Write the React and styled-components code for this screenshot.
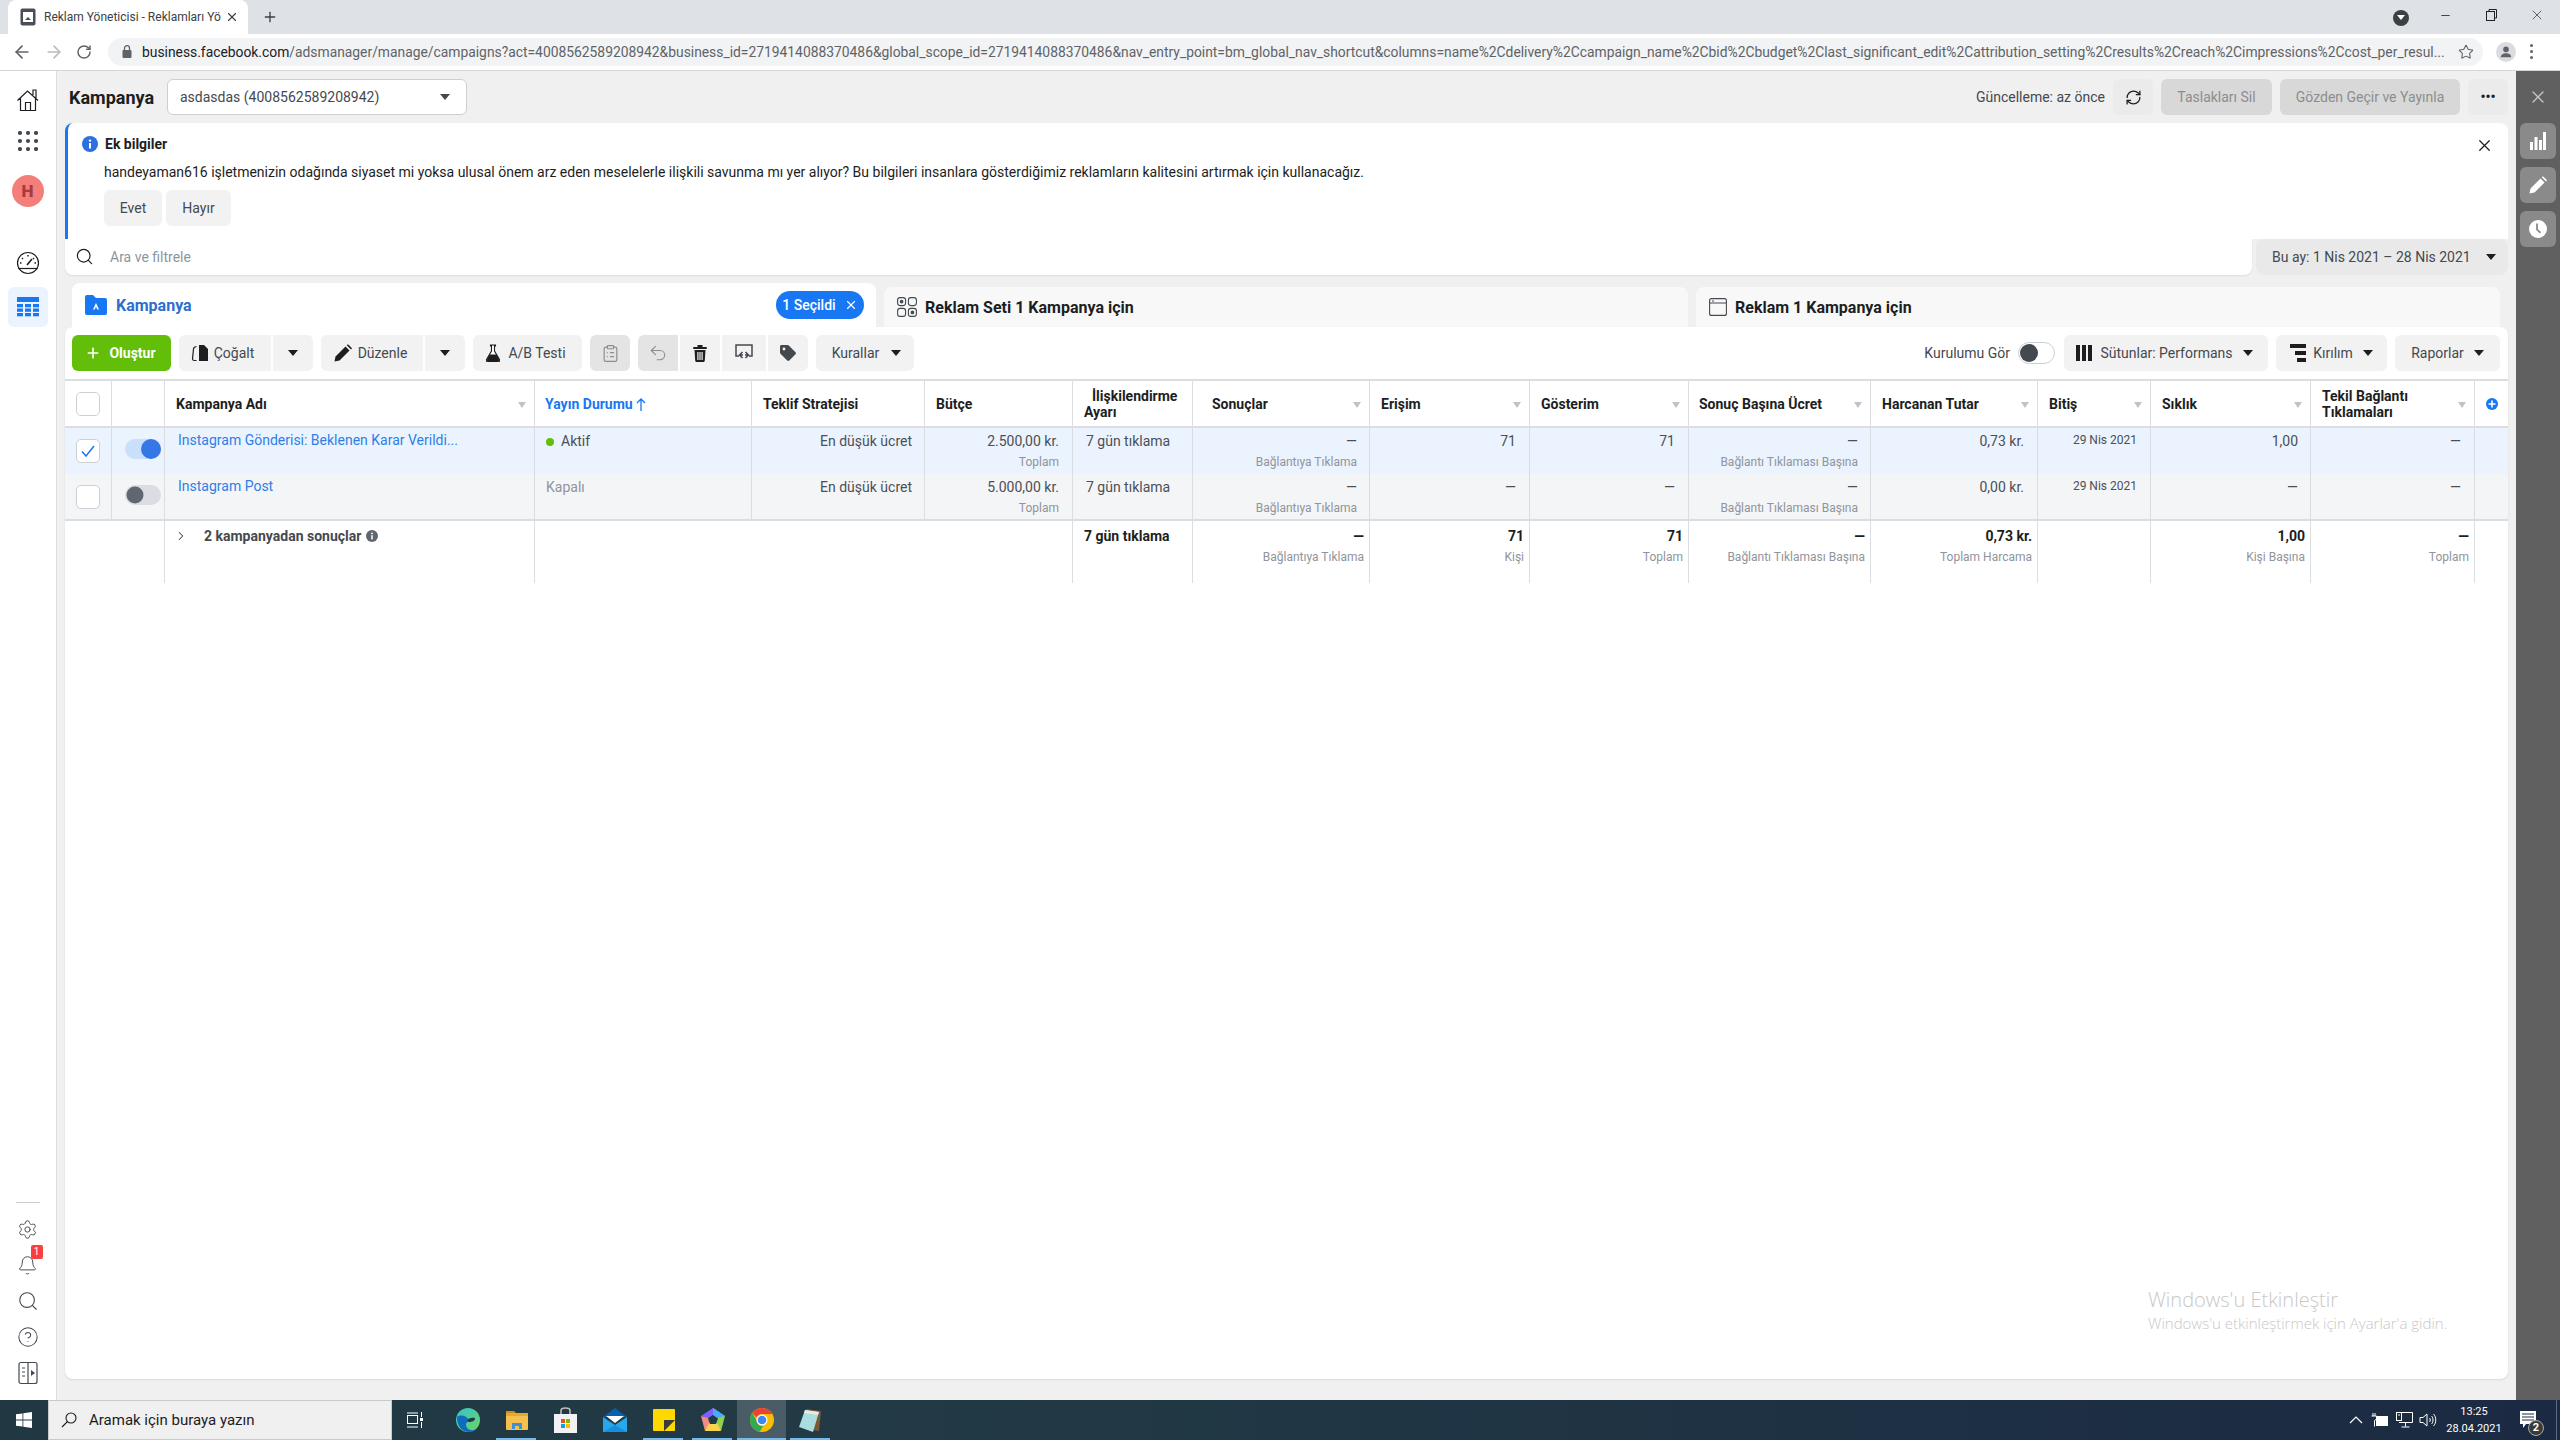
import React from 'react';
import styled, { createGlobalStyle } from 'styled-components';
import { ArrowLeft, ArrowRight, Bell, ChevronRight, CircleHelp, ClipboardList, Minus, Plus, RefreshCw, RotateCw, Search, Settings, Star, Undo2, X } from 'lucide-react';

const COLS = '47px 53px 370px 217px 173px 148px 120px 177px 160px 159px 182px 167px 113px 160px 164px 33px';

const URL_TEXT = '/adsmanager/manage/campaigns?act=4008562589208942&business_id=2719414088370486&global_scope_id=2719414088370486&nav_entry_point=bm_global_nav_shortcut&columns=name%2Cdelivery%2Ccampaign_name%2Cbid%2Cbudget%2Clast_significant_edit%2Cattribution_setting%2Cresults%2Creach%2Cimpressions%2Ccost_per_resul...';

const headers = [
	{ label: 'Kampanya Adı', pad: 11 },
	{ label: 'Yayın Durumu', pad: 10, sorted: true },
	{ label: 'Teklif Stratejisi', pad: 11, noCaret: true },
	{ label: 'Bütçe', pad: 11, noCaret: true },
	{ label: 'İlişkilendirme Ayarı', pad: 11, indent: 8, noCaret: true },
	{ label: 'Sonuçlar', pad: 19 },
	{ label: 'Erişim', pad: 11 },
	{ label: 'Gösterim', pad: 11 },
	{ label: 'Sonuç Başına Ücret', pad: 10 },
	{ label: 'Harcanan Tutar', pad: 11 },
	{ label: 'Bitiş', pad: 11 },
	{ label: 'Sıklık', pad: 11 },
	{ label: 'Tekil Bağlantı Tıklamaları', pad: 11 },
];

const rows = [
	{
		selected: true,
		name: 'Instagram Gönderisi: Beklenen Karar Verildi...',
		budget: '2.500,00 kr.',
		reach: '71',
		impressions: '71',
		spent: '0,73 kr.',
		frequency: '1,00',
	},
	{
		selected: false,
		name: 'Instagram Post',
		budget: '5.000,00 kr.',
		reach: '—',
		impressions: '—',
		spent: '0,00 kr.',
		frequency: '—',
	},
];

const summary = [
	['—', 'Bağlantıya Tıklama'],
	['71', 'Kişi'],
	['71', 'Toplam'],
	['—', 'Bağlantı Tıklaması Başına'],
	['0,73 kr.', 'Toplam Harcama'],
	null,
	['1,00', 'Kişi Başına'],
	['—', 'Toplam'],
];

const GlobalStyle = createGlobalStyle`
	html, body {
		margin: 0;
		padding: 0;
		background: #f0f0f0;
	}
	* {
		box-sizing: border-box;
	}
	body {
		font-family: Roboto, "Liberation Sans", sans-serif;
		font-size: 14px;
		color: #1c1e21;
	}
`;

const Page = styled.div`
	width: 2560px;
	height: 1440px;
	display: flex;
	flex-direction: column;
	overflow: hidden;
`;

const TabStrip = styled.div`
	height: 34px;
	flex: none;
	background: #dee1e6;
	display: flex;
	align-items: flex-end;
	padding-left: 8px;
	color: #3c4043;
`;

const BrowserTab = styled.div`
	width: 240px;
	height: 34px;
	background: #fff;
	border-radius: 8px 8px 0 0;
	display: flex;
	align-items: center;
	padding-left: 12px;
	font-size: 12px;
	color: #3c4043;
`;

const TabTitle = styled.span`
	width: 174px;
	margin-left: 8px;
	white-space: nowrap;
`;

const NewTab = styled.div`
	width: 44px;
	height: 34px;
	display: flex;
	align-items: center;
	justify-content: center;
`;

const WindowControls = styled.div`
	margin-left: auto;
	height: 34px;
	display: flex;
	align-items: center;
	color: #202124;
`;

const WindowButton = styled.div`
	width: 46px;
	height: 30px;
	margin-top: -4px;
	display: flex;
	align-items: center;
	justify-content: center;
`;

const ProfileDot = styled.div`
	width: 16px;
	height: 16px;
	border-radius: 50%;
	background: #3c4043;
	margin-right: 13px;
	margin-top: 1px;
	display: flex;
	align-items: center;
	justify-content: center;
`;

const Toolbar = styled.div`
	height: 37px;
	flex: none;
	background: #fff;
	border-bottom: 1px solid #d3d5d8;
	display: flex;
	align-items: center;
	padding-bottom: 1px;
	color: #5f6368;
`;

const NavIcons = styled.div`
	width: 108px;
	display: flex;
	align-items: center;
	gap: 12px;
	padding-left: 12px;
`;

const AddressBar = styled.div`
	width: 2375px;
	height: 28px;
	background: #f1f3f4;
	border-radius: 14px;
	display: flex;
	align-items: center;
	padding: 0 9px 0 14px;
	font-size: 13.85px;
	white-space: nowrap;
`;

const Domain = styled.span`
	color: #202124;
	margin-left: 10px;
`;

const UrlRest = styled.span`
	color: #5f6368;
	flex: 1;
	min-width: 0;
`;

const Avatar = styled.div`
	width: 20px;
	height: 20px;
	margin-left: 13px;
	border-radius: 50%;
	background: #dadce0;
	display: flex;
	align-items: center;
	justify-content: center;
`;

const Kebab = styled.div`
	margin-left: 14px;
	display: flex;
	flex-direction: column;
	gap: 3px;
	i {
		width: 3px;
		height: 3px;
		border-radius: 50%;
		background: #5f6368;
	}
`;

const Workspace = styled.div`
	flex: 1;
	min-height: 0;
	display: flex;
`;

const LeftRail = styled.nav`
	width: 57px;
	flex: none;
	background: #fff;
	border-right: 1px solid #dadde1;
	display: flex;
	flex-direction: column;
	align-items: center;
	padding: 9px 1px 9px 0;
`;

const RailButton = styled.div`
	width: 40px;
	height: ${(p) => p.$h || 40}px;
	flex: none;
	margin-top: ${(p) => p.$mt || 0}px;
	border-radius: 6px;
	background: ${(p) => (p.$active ? '#ebf3fe' : 'transparent')};
	display: flex;
	align-items: center;
	justify-content: center;
	position: relative;
	color: #444950;
`;

const UserCircle = styled.div`
	width: 32px;
	height: 32px;
	border-radius: 50%;
	background: #f47f7a;
	color: #a73a42;
	font-weight: 900;
	font-size: 17px;
	display: flex;
	align-items: center;
	justify-content: center;
`;

const RailRule = styled.div`
	width: 24px;
	height: 1px;
	background: #ccd0d5;
	margin-top: auto;
	margin-bottom: 8px;
`;

const NoticeBadge = styled.span`
	position: absolute;
	top: -2px;
	left: 23px;
	width: 12px;
	height: 14px;
	border-radius: 2px;
	background: #fa3e3e;
	color: #fff;
	font-size: 10px;
	line-height: 14px;
	text-align: center;
`;

const Main = styled.main`
	flex: 1;
	min-width: 0;
	display: flex;
	flex-direction: column;
	padding: 8px 8px 21px 8px;
`;

const HeaderRow = styled.header`
	height: 36px;
	flex: none;
	display: flex;
	align-items: center;
	margin-bottom: 8px;
`;

const PageTitle = styled.h1`
	width: 94px;
	margin: 0 4px 0 4px;
	font-size: 18px;
	font-weight: 700;
	white-space: nowrap;
	color: #1c1e21;
`;

const AccountSelect = styled.div`
	width: 300px;
	height: 36px;
	background: #fff;
	border: 1px solid #ccd0d5;
	border-radius: 6px;
	display: flex;
	align-items: center;
	justify-content: space-between;
	padding: 0 16px 0 12px;
	color: #444950;
`;

const HeaderActions = styled.div`
	margin-left: auto;
	display: flex;
	align-items: center;
	gap: 8px;
	color: #444950;
`;

const Button = styled.div`
	height: 36px;
	width: ${(p) => (p.$w ? `${p.$w}px` : 'auto')};
	flex: none;
	display: flex;
	align-items: center;
	justify-content: ${(p) => p.$justify || 'center'};
	gap: ${(p) => p.$gap || 0}px;
	padding: ${(p) => p.$pad || '0'};
	border-radius: ${(p) => p.$radius || '6px'};
	background: ${(p) => p.$bg || '#f2f2f2'};
	color: ${(p) => p.$color || '#444950'};
	font-weight: ${(p) => p.$weight || 400};
	white-space: nowrap;
`;

const Caret = styled.i`
	display: block;
	width: 0;
	height: 0;
	flex: none;
	margin-left: ${(p) => p.$ml || 0}px;
	border-left: ${(p) => p.$half || 5}px solid transparent;
	border-right: ${(p) => p.$half || 5}px solid transparent;
	border-top: ${(p) => (p.$half ? 5 : 6)}px solid ${(p) => p.$color || '#1c1e21'};
`;

const Banner = styled.section`
	height: 116px;
	flex: none;
	background: #fff;
	border-left: 3px solid #1877f2;
	border-radius: 8px 8px 0 0;
	position: relative;
	padding: 12px 0 0 14px;
`;

const BannerTitle = styled.div`
	display: flex;
	align-items: center;
	gap: 7px;
	height: 18px;
	font-weight: 700;
	color: #1c1e21;
`;

const BannerText = styled.p`
	margin: 11px 0 10px 22px;
	line-height: 16px;
	color: #1c1e21;
`;

const BannerButtons = styled.div`
	display: flex;
	gap: 4px;
	margin-left: 22px;
`;

const CloseBanner = styled.div`
	position: absolute;
	top: 13px;
	right: 14px;
	color: #1c1e21;
	display: flex;
`;

const SearchRow = styled.div`
	height: 36px;
	flex: none;
	display: flex;
	gap: 4px;
`;

const SearchBox = styled.div`
	flex: 1;
	background: #fff;
	border-radius: 0 0 8px 8px;
	box-shadow: 0 1px 2px rgba(0, 0, 0, 0.08);
	display: flex;
	align-items: center;
	gap: 16px;
	padding-left: 10px;
	color: #8d949e;
	padding-bottom: 1px;
`;

const DateRange = styled.div`
	width: 252px;
	background: #e9e9e9;
	border-radius: 8px;
	display: flex;
	align-items: center;
	justify-content: space-between;
	padding: 0 12px 1px 16px;
	color: #444950;
`;

const LevelTabs = styled.div`
	height: 44px;
	flex: none;
	margin-top: 8px;
	padding: 0 8px 0 7px;
	display: flex;
	align-items: flex-end;
	gap: 8px;
`;

const LevelTab = styled.div`
	flex: 1;
	height: ${(p) => (p.$active ? 44 : 40)}px;
	background: ${(p) => (p.$active ? '#fff' : '#f8f8f8')};
	border-radius: 8px 8px 0 0;
	display: flex;
	align-items: center;
	gap: ${(p) => (p.$active ? 9 : 8)}px;
	padding: 0 12px 0 13px;
	font-size: 16px;
	font-weight: 700;
	color: ${(p) => (p.$active ? '#2d6fcc' : '#1c1e21')};
`;

const SelectedPill = styled.div`
	margin-left: auto;
	width: 88px;
	height: 28px;
	border-radius: 14px;
	background: #1877f2;
	color: #fff;
	font-size: 14px;
	font-weight: 500;
	display: flex;
	align-items: center;
	justify-content: center;
	gap: 8px;
`;

const Card = styled.section`
	flex: 1;
	min-height: 0;
	background: #fff;
	border-radius: 8px;
	box-shadow: 0 1px 2px rgba(0, 0, 0, 0.1);
	position: relative;
`;

const ActionBar = styled.div`
	height: 52px;
	padding: 8px 8px 8px 7px;
	display: flex;
	align-items: center;
`;

const ActionGroup = styled.div`
	display: flex;
	gap: 2px;
	margin-right: 8px;
`;

const ViewToggleLabel = styled.span`
	margin-left: auto;
	margin-right: 8px;
	color: #444950;
`;

const OutlineSwitch = styled.div`
	width: 37px;
	height: 22px;
	border: 1px solid #ccd0d5;
	border-radius: 11px;
	background: #fff;
	margin-right: 9px;
	padding: 1px;
	i {
		display: block;
		width: 18px;
		height: 18px;
		border-radius: 50%;
		background: #444950;
	}
`;

const GridRow = styled.div`
	display: grid;
	grid-template-columns: ${COLS};
	height: ${(p) => p.$h}px;
	background: ${(p) => p.$bg || 'transparent'};
	border-top: ${(p) => (p.$top ? '2px solid #dadde1' : '0')};
	border-bottom: ${(p) => (p.$bottom ? '2px solid #dadde1' : '0')};
`;

const HeadCell = styled.div`
	display: flex;
	align-items: center;
	justify-content: space-between;
	padding: 0 8px 0 ${(p) => p.$pad}px;
	border-right: 1px solid #dadde1;
	font-weight: 700;
	line-height: 16px;
	color: ${(p) => (p.$sorted ? '#1877f2' : '#1c1e21')};
`;

const HeadLabel = styled.span`
	display: block;
	text-indent: ${(p) => p.$indent || 0}px;
`;

const SortCaret = styled.i`
	display: block;
	flex: none;
	width: 0;
	height: 0;
	margin-top: 3px;
	border-left: 4px solid transparent;
	border-right: 4px solid transparent;
	border-top: 6px solid #bec3c9;
`;

const BoxCell = styled.div`
	border-right: ${(p) => (p.$plain ? '0' : '1px solid #dadde1')};
	padding-top: ${(p) => p.$top || 0}px;
	padding-left: ${(p) => p.$left || 0}px;
	display: flex;
	justify-content: center;
	align-items: ${(p) => (p.$center ? 'center' : 'flex-start')};
`;

const CheckBox = styled.div`
	width: 24px;
	height: 24px;
	background: #fff;
	border: 1px solid #ccd0d5;
	border-radius: 5px;
	display: flex;
	align-items: center;
	justify-content: center;
	color: #1877f2;
`;

const Toggle = styled.div`
	width: 36px;
	height: 20px;
	border-radius: 10px;
	background: ${(p) => (p.$on ? '#c9dffb' : '#dadde1')};
	display: flex;
	justify-content: ${(p) => (p.$on ? 'flex-end' : 'flex-start')};
	i {
		display: block;
		width: 20px;
		height: 20px;
		border-radius: 50%;
		background: ${(p) => (p.$on ? '#3578e5' : '#606770')};
		transform: scale(${(p) => (p.$on ? 1 : 0.85)});
	}
`;

const Cell = styled.div`
	border-right: ${(p) => (p.$plain ? '0' : '1px solid #dadde1')};
	padding: ${(p) => p.$top || 5}px ${(p) => p.$right || 13}px 0 ${(p) => p.$left || 11}px;
	text-align: ${(p) => (p.$end ? 'right' : 'left')};
	line-height: 16px;
	color: #4b4f56;
	white-space: nowrap;
`;

const CampaignLink = styled.span`
	color: #2f7fe8;
	position: relative;
	top: -1px;
`;

const StatusDot = styled.i`
	display: inline-block;
	width: 8px;
	height: 8px;
	margin-right: 7px;
	border-radius: 50%;
	background: #63be09;
`;

const Muted = styled.span`
	color: #90949c;
`;

const SubValue = styled.div`
	margin-top: 5px;
	font-size: 12px;
	line-height: 16px;
	color: #90949c;
`;

const DateValue = styled.span`
	font-size: 12px;
	position: relative;
	top: -2px;
`;

const StrongValue = styled.span`
	font-weight: 700;
	color: #1c1e21;
`;

const SummaryLabel = styled.div`
	display: flex;
	align-items: center;
	gap: 5px;
	font-weight: 700;
	color: #444950;
`;

const Watermark = styled.div`
	position: absolute;
	left: 2083px;
	top: 960px;
	color: #c8c8c8;
	font-family: "Open Sans", sans-serif;
	font-weight: 300;
	pointer-events: none;
	white-space: nowrap;
`;

const WatermarkTitle = styled.div`
	font-size: 20px;
	line-height: 26px;
`;

const WatermarkText = styled.div`
	font-size: 15px;
	line-height: 20px;
`;

const RightRail = styled.aside`
	width: 44px;
	flex: none;
	background: #606060;
	display: flex;
	flex-direction: column;
	align-items: center;
	gap: 8px;
	padding-top: 8px;
	color: #c8c8c8;
`;

const RailClose = styled.div`
	height: 36px;
	display: flex;
	align-items: center;
	justify-content: center;
`;

const RailAction = styled.div`
	width: 36px;
	height: 36px;
	border-radius: 6px;
	background: #8a8a8a;
	display: flex;
	align-items: center;
	justify-content: center;
`;

const Taskbar = styled.footer`
	height: 40px;
	flex: none;
	background: linear-gradient(90deg, #213843 0%, #223a45 35%, #1b2a42 100%);
	display: flex;
	align-items: center;
	color: #fff;
`;

const StartButton = styled.div`
	width: 48px;
	height: 40px;
	display: flex;
	align-items: center;
	justify-content: center;
`;

const TaskSearch = styled.div`
	width: 344px;
	height: 40px;
	background: #f0f0f0;
	border: 1px solid #c8cbcd;
	display: flex;
	align-items: center;
	gap: 12px;
	padding-left: 12px;
	font-size: 15px;
	color: #1c1c1c;
`;

const TaskView = styled.div`
	width: 46px;
	margin-right: 5px;
	display: flex;
	justify-content: center;
`;

const TaskItem = styled.div`
	width: 49px;
	height: 40px;
	position: relative;
	display: flex;
	align-items: center;
	justify-content: center;
	background: ${(p) => (p.$active ? 'rgba(255,255,255,0.18)' : 'transparent')};
	&::after {
		content: '';
		display: ${(p) => (p.$running ? 'block' : 'none')};
		position: absolute;
		bottom: 0;
		left: ${(p) => (p.$active ? 0 : 4)}px;
		right: ${(p) => (p.$active ? 0 : 5)}px;
		height: 2px;
		background: #76b9ed;
	}
`;

const Tray = styled.div`
	margin-left: auto;
	display: flex;
	align-items: center;
	height: 40px;
`;

const TrayIcon = styled.div`
	width: 24px;
	display: flex;
	justify-content: center;
`;

const Clock = styled.div`
	width: 62px;
	margin-left: 3px;
	text-align: center;
	font-size: 11px;
	line-height: 17px;
`;

const NoticeIcon = styled.div`
	width: 46px;
	margin-right: 5px;
	position: relative;
	display: flex;
	justify-content: center;
`;

const NoticeCount = styled.span`
	position: absolute;
	left: 23px;
	top: 9px;
	width: 16px;
	height: 16px;
	border-radius: 50%;
	background: #3a3a3a;
	border: 1px solid #aaa;
	font-size: 11px;
	font-weight: 700;
	line-height: 14px;
	text-align: center;
`;

const ShowDesktop = styled.div`
	width: 1px;
	height: 40px;
	background: #5b6a7c;
	margin-right: 3px;
`;

const Favicon = () => (
	<svg width="16" height="18" viewBox="0 0 16 18">
		<rect x="0.5" y="0.5" width="15" height="17" rx="2" fill="#4a4f57" />
		<rect x="3" y="4" width="10" height="10" fill="#fff" />
		<path d="M5 12l3-3 3 3z" fill="#4a4f57" />
	</svg>
);

const LockIcon = () => (
	<svg width="10" height="13" viewBox="0 0 10 13">
		<rect x="0.5" y="5" width="9" height="8" rx="1" fill="#5f6368" />
		<path d="M2.5 5V3.2a2.5 2.5 0 0 1 5 0V5" fill="none" stroke="#5f6368" strokeWidth="1.3" />
	</svg>
);

const PersonIcon = ({ fill = '#5f6368', size = 16 }) => (
	<svg width={size} height={size} viewBox="0 0 16 16">
		<circle cx="8" cy="5" r="3.2" fill={fill} />
		<path d="M2 14c0-3 3-4.5 6-4.5s6 1.5 6 4.5z" fill={fill} />
	</svg>
);

const HomeIcon = () => (
	<svg width="24" height="24" viewBox="0 0 24 24" fill="none" stroke="#1c1e21" strokeWidth="1.2">
		<path d="M1.5 12.5L11.5 3l10.5 9.5M4.5 10.5V22.5H19.5V10.5M9.5 22.5V14.5H14.5V22.5M17 7V2H20V10" />
	</svg>
);

const DotsIcon = () => (
	<svg width="20" height="20" viewBox="0 0 20 20" fill="#444950">
		{[2, 10, 18].map((y) => [2, 10, 18].map((x) => <circle key={`${x}${y}`} cx={x} cy={y} r="2.1" />))}
	</svg>
);

const GaugeIcon = () => (
	<svg width="24" height="24" viewBox="0 0 24 24" fill="none" stroke="#1c1e21" strokeWidth="1.2">
		<circle cx="12" cy="12" r="10.5" />
		<path d="M2.5 17.5h19" />
		<path d="M11 14l5-6" strokeWidth="1.6" />
		<path d="M12 4v1.5M6 7l1 1M18 7l-1 1M4 12h1.5M20 12h-1.5" strokeWidth="1.4" />
	</svg>
);

const TableIcon = () => (
	<svg width="22" height="20" viewBox="0 0 22 20" fill="#1877f2">
		<rect width="22" height="5" />
		{[7, 11.5, 16].map((y) => [0, 8, 16].map((x) => <rect key={`${x}${y}`} x={x} y={y} width="6" height="3.3" />))}
	</svg>
);

const PanelIcon = () => (
	<svg width="20" height="24" viewBox="0 0 20 24" fill="none" stroke="#444950" strokeWidth="1.2">
		<rect x="1" y="1.5" width="18" height="21" rx="2" />
		<path d="M10 1.5v21M4 7h3M4 11h3M4 15h3" />
		<path d="M13 9l4 3-4 3z" fill="#444950" stroke="none" />
	</svg>
);

const BarsIcon = () => (
	<svg width="16" height="18" viewBox="0 0 16 18" fill="#fff">
		<rect x="0" y="10" width="3" height="8" />
		<rect x="4.5" y="5" width="3" height="13" />
		<rect x="9" y="8" width="3" height="10" />
		<rect x="13" y="0" width="3" height="18" />
	</svg>
);

const PencilIcon = ({ fill = '#fff', size = 18 }) => (
	<svg width={size} height={size} viewBox="0 0 18 18" fill={fill}>
		<path d="M0.5 17.5l1-5L11.5 2.5l4 4-10 10zM12.8 1.2l1.2-1 4 4-1 1.2z" />
	</svg>
);

const ClockIcon = () => (
	<svg width="18" height="18" viewBox="0 0 18 18">
		<circle cx="9" cy="9" r="9" fill="#fff" />
		<path d="M8 3.5v6.2l3.5 3" fill="none" stroke="#8a8a8a" strokeWidth="1.8" />
	</svg>
);

const InfoIcon = ({ size = 16, fill = '#2d6fe0' }) => (
	<svg width={size} height={size} viewBox="0 0 16 16">
		<circle cx="8" cy="8" r="8" fill={fill} />
		<rect x="7" y="7" width="2" height="5.5" fill="#fff" />
		<circle cx="8" cy="4.6" r="1.2" fill="#fff" />
	</svg>
);

const FolderIcon = () => (
	<svg width="22" height="20" viewBox="0 0 22 20">
		<path d="M0 2a2 2 0 0 1 2-2h6l3 3h9a2 2 0 0 1 2 2v13a2 2 0 0 1-2 2H2a2 2 0 0 1-2-2z" fill="#1877f2" />
		<path d="M11 8l3 6.5h-1.8l-1.2-3-1.2 3H8z" fill="#fff" />
	</svg>
);

const AdSetIcon = () => (
	<svg width="20" height="20" viewBox="0 0 20 20" fill="none" stroke="#444950" strokeWidth="1.1">
		<rect x="0.6" y="0.6" width="8" height="8" rx="2.5" />
		<rect x="11.4" y="0.6" width="8" height="8" rx="2.5" />
		<rect x="0.6" y="11.4" width="8" height="8" rx="2.5" />
		<rect x="11.4" y="11.4" width="8" height="8" rx="2.5" />
		<circle cx="4.6" cy="4.6" r="1.3" fill="#444950" />
		<circle cx="15.4" cy="15.4" r="1.3" fill="#444950" />
	</svg>
);

const AdIcon = () => (
	<svg width="18" height="18" viewBox="0 0 18 18" fill="none" stroke="#444950" strokeWidth="1.1">
		<rect x="0.6" y="0.6" width="16.8" height="16.8" rx="2" />
		<path d="M0.6 5h16.8M3 3h2" />
	</svg>
);

const CopyIcon = () => (
	<svg width="18" height="18" viewBox="0 0 18 18">
		<path d="M8 1h5l4 4v12H8z" fill="#1c1e21" />
		<path d="M5.5 2.5C3 3 2.5 4 2.5 5l-1 10c0 1 1 1.5 2 1.5h2" fill="none" stroke="#1c1e21" strokeWidth="1.2" />
	</svg>
);

const FlaskIcon = () => (
	<svg width="14" height="18" viewBox="0 0 14 18">
		<path d="M4.5 1h5v1h-1v5l5 8.5c.5 1.2 0 2.5-1.5 2.500H2c-1.500 0-2-1.300-1.500-2.500l5-8.500V2h-1z" fill="#fff" stroke="#1c1e21" strokeWidth="1.1" />
		<path d="M3.500 10.500h7l2.500 5c.4 1-.1 2.500-1.500 2.500h-9c-1.400 0-1.900-1.500-1.500-2.500z" fill="#1c1e21" />
	</svg>
);

const TrashIcon = () => (
	<svg width="14" height="17" viewBox="0 0 14 17" fill="#1c1e21">
		<rect x="0" y="2" width="14" height="2" rx="1" />
		<rect x="4.500" y="0" width="5" height="2" />
		<path d="M1.500 5h11l-.7 10.500c0 .8-.6 1.500-1.500 1.500H3.700c-.9 0-1.500-.7-1.500-1.500zM4.300 7v8h1.200V7zm2.100 0v8h1.200V7zm2.100 0v8h1.200V7z" fillRule="evenodd" />
	</svg>
);

const ShareIcon = () => (
	<svg width="18" height="18" viewBox="0 0 18 18" fill="none" stroke="#444950" strokeWidth="1.5">
		<path d="M4 12H1V1h16v11h-3" />
		<path d="M7.500 8l-3 3 3 3M10.500 8l3 3-3 3M4.500 11h3.500M10 11h3.500" />
	</svg>
);

const TagIcon = () => (
	<svg width="18" height="18" viewBox="0 0 18 18" fill="#444950">
		<path d="M1 2.500C1 1.500 1.700 1 2.500 1h6c.5 0 1 .2 1.300.5l6.700 6.700c.6.600.6 1.500 0 2.100l-6.200 6.200c-.6.600-1.500.6-2.100 0L1.500 9.800c-.3-.3-.5-.8-.5-1.300z" />
		<circle cx="5" cy="5" r="1.400" fill="#f2f2f2" />
	</svg>
);

const ColumnsIcon = () => (
	<svg width="16" height="16" viewBox="0 0 16 16" fill="#1c1e21">
		<rect x="0" width="4" height="16" />
		<rect x="6" width="4" height="16" />
		<rect x="12" width="4" height="16" />
	</svg>
);

const BreakdownIcon = () => (
	<svg width="16" height="18" viewBox="0 0 16 18" fill="#1c1e21">
		<rect x="0" width="16" height="4" />
		<rect x="5" y="7" width="11" height="4" />
		<rect x="7" y="14" width="9" height="4" />
	</svg>
);

const AddColumnIcon = () => (
	<svg width="12" height="14" viewBox="0 0 12 14">
		<ellipse cx="6" cy="7" rx="6" ry="6" fill="#1877f2" />
		<path d="M6 3.500v7M2.500 7h7" stroke="#fff" strokeWidth="1.600" />
	</svg>
);

const WindowsLogo = () => (
	<svg width="16" height="16" viewBox="0 0 16 16" fill="#fff">
		<path d="M0 2.300L6.500 1.400V7.600H0zM7.300 1.300L16 0V7.600H7.300zM0 8.400H6.500V14.600L0 13.700zM7.300 8.400H16V16L7.300 14.700z" />
	</svg>
);

const TaskSearchIcon = () => (
	<svg width="16" height="16" viewBox="0 0 16 16" fill="none" stroke="#1c1c1c" strokeWidth="1.100">
		<circle cx="10" cy="6" r="5" />
		<path d="M6.500 9.500L1 15" />
	</svg>
);

const TaskViewIcon = () => (
	<svg width="17" height="16" viewBox="0 0 17 16" fill="none" stroke="#fff" strokeWidth="1">
		<rect x="0.500" y="3.500" width="10" height="8" />
		<path d="M0 1h11M0 15h11M14.500 0v5M14.500 10v6" />
		<rect x="13" y="6" width="3" height="3" fill="#fff" stroke="none" />
	</svg>
);

const EdgeIcon = () => (
	<svg width="24" height="24" viewBox="0 0 24 24">
		<defs>
			<linearGradient id="edgeA" x1="0" y1="0" x2="1" y2="1">
				<stop offset="0" stopColor="#36c2d0" />
				<stop offset="1" stopColor="#6ad660" />
			</linearGradient>
		</defs>
		<circle cx="12" cy="12" r="12" fill="url(#edgeA)" />
		<path d="M1 9c0 9 5 15 12 15 3 0 5-1 7-2.500-6 2-10-1-10-5 0-2 2-3.500 4-3.500C11 8 5 6 1 9z" fill="#0f6cbd" />
		<path d="M11 13c1-3 5-4 8-3 0 3-3 4-6 4z" fill="#223a45" />
	</svg>
);

const ExplorerIcon = () => (
	<svg width="22" height="20" viewBox="0 0 22 20">
		<path d="M0 1h8l2 2h-10z" fill="#c98f1a" />
		<rect x="0" y="3" width="22" height="17" rx="1" fill="#f5c14e" />
		<rect x="0" y="3" width="22" height="3" fill="#e6a82e" />
		<path d="M6 19v-6h10v6h-3v-3h-4v3z" fill="#3c8fd8" />
	</svg>
);

const StoreIcon = () => (
	<svg width="23" height="26" viewBox="0 0 23 26">
		<path d="M7 8V3.500C7 1.500 8.500 1 11.500 1S16 1.500 16 3.500V8" fill="none" stroke="#bbb" strokeWidth="1.600" />
		<rect x="0" y="7" width="23" height="19" fill="#f2f2f2" />
		<rect x="7" y="12" width="4" height="4" fill="#f25022" />
		<rect x="12" y="12" width="4" height="4" fill="#7fba00" />
		<rect x="7" y="17" width="4" height="4" fill="#00a4ef" />
		<rect x="12" y="17" width="4" height="4" fill="#ffb900" />
	</svg>
);

const MailIcon = () => (
	<svg width="24" height="24" viewBox="0 0 24 24">
		<path d="M0 9L12 0l12 9z" fill="#0a5fb0" />
		<path d="M3 8h18l-9 7z" fill="#fff" />
		<path d="M0 9l12 8 12-8v15H0z" fill="#28a8ea" />
		<path d="M0 24L12 17l12 7z" fill="#1490df" />
	</svg>
);

const StickyIcon = () => (
	<svg width="22" height="22" viewBox="0 0 22 22">
		<rect width="22" height="22" rx="1" fill="#ffd800" />
		<path d="M11 22V11h11z" fill="#e8a800" />
		<path d="M11 22V11h11l-11 11z" fill="#3b3b3b" />
	</svg>
);

const PolygonIcon = () => (
	<svg width="24" height="24" viewBox="0 0 24 24">
		<path d="M12 0l12 8-4 15-8-7z" fill="#8fd14f" />
		<path d="M12 0l-12 8 8 2 4-3z" fill="#7b61ff" />
		<path d="M12 0l12 8-8 2-4-3z" fill="#4aa8ff" />
		<path d="M0 8l4 15 8-7-4-6z" fill="#f28b82" />
		<path d="M4 23h16l-4-8H8z" fill="#fbd34d" />
		<path d="M12 7l5 3.500-2 5.500H9L7 10.500z" fill="#223a45" />
	</svg>
);

const ChromeIcon = () => (
	<svg width="24" height="24" viewBox="0 0 24 24">
		<circle cx="12" cy="12" r="12" fill="#fbbc04" />
		<path d="M12 0a12 12 0 0 1 10.400 6H12a6 6 0 0 0-5.500 3.500L2.300 4.900A12 12 0 0 1 12 0z" fill="#ea4335" />
		<path d="M2.300 4.900L7 13.500A6 6 0 0 0 13 18l-3.200 5.800A12 12 0 0 1 2.300 4.900z" fill="#34a853" />
		<circle cx="12" cy="12" r="5.500" fill="#fff" />
		<circle cx="12" cy="12" r="4.300" fill="#4285f4" />
	</svg>
);

const NotepadIcon = () => (
	<svg width="24" height="24" viewBox="0 0 24 24">
		<path d="M7 1l15 2-2 20-14-2z" fill="#7a5a34" />
		<path d="M6 2l14 2-6 20-14-5z" fill="#a9dde0" />
		<path d="M6 2l14 2-1 3-14-2z" fill="#e8e8e8" />
	</svg>
);

const BatteryIcon = () => (
	<svg width="18" height="14" viewBox="0 0 18 14" fill="none" stroke="#fff" strokeWidth="1">
		<rect x="5.500" y="3.500" width="11" height="9" fill="#fff" />
		<path d="M2 0v3M4 0v3M0.500 3h5v3l-2 1.500v6" />
	</svg>
);

const NetworkIcon = () => (
	<svg width="17" height="16" viewBox="0 0 17 16" fill="none" stroke="#fff" strokeWidth="1">
		<path d="M3 0.500h13.500v10H3M9.500 10.500v4M5.500 15h8" />
		<rect x="0.500" y="0.500" width="5" height="8" fill="#1b2a42" />
		<path d="M2 3h2" />
	</svg>
);

const SoundIcon = () => (
	<svg width="18" height="16" viewBox="0 0 18 16" fill="none" stroke="#fff" strokeWidth="1">
		<path d="M1 5.500h3L8 2v12L4 10.500H1z" />
		<path d="M10.500 6c1 1 1 3 0 4M12.500 4c2 2 2 6 0 8M14.500 2c3 3 3 9 0 12" />
	</svg>
);

const NoticeGlyph = () => (
	<svg width="16" height="18" viewBox="0 0 16 18" fill="#fff">
		<path d="M0 0h16v13H6l-3 4v-4H0z" />
		<path d="M2 3h12M2 6h12M2 9h12" stroke="#1b2a42" strokeWidth="1" />
	</svg>
);

const App = () => (
	<Page>
		<GlobalStyle />
		<TabStrip>
			<BrowserTab>
				<Favicon />
				<TabTitle>Reklam Yöneticisi - Reklamları Yö</TabTitle>
				<X size={14} strokeWidth={2} style={{ marginLeft: 7 }} />
			</BrowserTab>
			<NewTab>
				<Plus size={16} strokeWidth={2} />
			</NewTab>
			<WindowControls>
				<ProfileDot>
					<Caret $color="#fff" $half={4} />
				</ProfileDot>
				<WindowButton>
					<Minus size={13} strokeWidth={1.5} />
				</WindowButton>
				<WindowButton>
					<svg width="11" height="12" viewBox="0 0 11 12" fill="none" stroke="#202124">
						<rect x="0.5" y="2.5" width="8" height="9" />
						<path d="M3 2.500V.5h7.500v8.500H8.500" />
					</svg>
				</WindowButton>
				<WindowButton>
					<X size={16} strokeWidth={1} />
				</WindowButton>
			</WindowControls>
		</TabStrip>

		<Toolbar>
			<NavIcons>
				<ArrowLeft size={20} strokeWidth={2} />
				<ArrowRight size={20} strokeWidth={2} color="#babcbe" />
				<RotateCw size={16} strokeWidth={2.2} />
			</NavIcons>
			<AddressBar>
				<LockIcon />
				<Domain>business.facebook.com</Domain>
				<UrlRest>{URL_TEXT}</UrlRest>
				<Star size={16} strokeWidth={1.6} />
			</AddressBar>
			<Avatar>
				<PersonIcon size={14} />
			</Avatar>
			<Kebab>
				<i />
				<i />
				<i />
			</Kebab>
		</Toolbar>

		<Workspace>
			<LeftRail>
				<RailButton><HomeIcon /></RailButton>
				<RailButton $mt={1}><DotsIcon /></RailButton>
				<RailButton $mt={10}><UserCircle>H</UserCircle></RailButton>
				<RailButton $mt={32}><GaugeIcon /></RailButton>
				<RailButton $mt={4} $active><TableIcon /></RailButton>
				<RailRule />
				<RailButton $h={36}><Settings size={21} strokeWidth={1.1} /></RailButton>
				<RailButton $h={36}>
					<Bell size={21} strokeWidth={1.1} />
					<NoticeBadge>1</NoticeBadge>
				</RailButton>
				<RailButton $h={36}><Search size={22} strokeWidth={1.2} /></RailButton>
				<RailButton $h={36}><CircleHelp size={22} strokeWidth={1.1} /></RailButton>
				<RailButton $h={36}><PanelIcon /></RailButton>
			</LeftRail>

			<Main>
				<HeaderRow>
					<PageTitle>Kampanya</PageTitle>
					<AccountSelect>
						<span>asdasdas (4008562589208942)</span>
						<Caret $color="#444950" />
					</AccountSelect>
					<HeaderActions>
						<span>Güncelleme: az önce</span>
						<Button $w={40} $bg="#ebebeb">
							<RefreshCw size={17} strokeWidth={1.8} color="#1c1e21" />
						</Button>
						<Button $w={111} $bg="#d8d8d8" $color="#8d8d8d">Taslakları Sil</Button>
						<Button $w={180} $bg="#d8d8d8" $color="#8d8d8d">Gözden Geçir ve Yayınla</Button>
						<Button $w={40} $bg="#ebebeb" $color="#1c1e21"><strong>•••</strong></Button>
					</HeaderActions>
				</HeaderRow>

				<Banner>
					<BannerTitle>
						<InfoIcon />
						Ek bilgiler
					</BannerTitle>
					<BannerText>
						handeyaman616 işletmenizin odağında siyaset mi yoksa ulusal önem arz eden meselelerle ilişkili savunma mı yer alıyor? Bu bilgileri insanlara gösterdiğimiz reklamların kalitesini artırmak için kullanacağız.
					</BannerText>
					<BannerButtons>
						<Button $w={58}>Evet</Button>
						<Button $w={65}>Hayır</Button>
					</BannerButtons>
					<CloseBanner>
						<X size={19} strokeWidth={1.6} />
					</CloseBanner>
				</Banner>

				<SearchRow>
					<SearchBox>
						<Search size={19} strokeWidth={1.5} color="#1c1e21" />
						<span>Ara ve filtrele</span>
					</SearchBox>
					<DateRange>
						<span>Bu ay: 1 Nis 2021 – 28 Nis 2021</span>
						<Caret />
					</DateRange>
				</SearchRow>

				<LevelTabs>
					<LevelTab $active>
						<FolderIcon />
						Kampanya
						<SelectedPill>
							1 Seçildi
							<X size={14} strokeWidth={2} />
						</SelectedPill>
					</LevelTab>
					<LevelTab>
						<AdSetIcon />
						Reklam Seti 1 Kampanya için
					</LevelTab>
					<LevelTab>
						<AdIcon />
						Reklam 1 Kampanya için
					</LevelTab>
				</LevelTabs>

				<Card>
					<ActionBar>
						<Button $w={99} $bg="#63be09" $color="#fff" $weight={700} $gap={8} $pad="0 2px 0 0" style={{ marginRight: 8 }}>
							<Plus size={16} strokeWidth={2.5} />
							Oluştur
						</Button>
						<ActionGroup>
							<Button $w={92} $gap={5} $pad="0 5px 0 0" $radius="6px 0 0 6px"><CopyIcon />Çoğalt</Button>
							<Button $w={40} $radius="0 6px 6px 0"><Caret /></Button>
						</ActionGroup>
						<ActionGroup>
							<Button $w={102} $gap={6} $pad="0 3px 0 0" $radius="6px 0 0 6px"><PencilIcon fill="#1c1e21" />Düzenle</Button>
							<Button $w={40} $radius="0 6px 6px 0"><Caret /></Button>
						</ActionGroup>
						<ActionGroup>
							<Button $w={109} $gap={8} $pad="0 3px 0 0"><FlaskIcon />A/B Testi</Button>
						</ActionGroup>
						<ActionGroup>
							<Button $w={40} $bg="#e4e4e4"><ClipboardList size={19} strokeWidth={1.5} color="#8d8d8d" /></Button>
						</ActionGroup>
						<ActionGroup>
							<Button $w={40} $bg="#e4e4e4" $radius="6px 0 0 6px"><Undo2 size={20} strokeWidth={1.3} color="#8d8d8d" /></Button>
							<Button $w={40} $radius="0"><TrashIcon /></Button>
							<Button $w={44} $radius="0"><ShareIcon /></Button>
							<Button $w={40} $radius="0 6px 6px 0"><TagIcon /></Button>
						</ActionGroup>
						<Button $w={98} $gap={12} $pad="0 0 0 3px">Kurallar<Caret /></Button>
						<ViewToggleLabel>Kurulumu Gör</ViewToggleLabel>
						<OutlineSwitch><i /></OutlineSwitch>
						<ActionGroup>
							<Button $w={204} $gap={8} $pad="0 3px 0 0"><ColumnsIcon />Sütunlar: Performans<Caret $ml={2} /></Button>
						</ActionGroup>
						<ActionGroup>
							<Button $w={111} $gap={7}><BreakdownIcon />Kırılım<Caret $ml={3} /></Button>
						</ActionGroup>
						<Button $w={105} $gap={10}>Raporlar<Caret /></Button>
					</ActionBar>

					<GridRow $h={49} $top $bottom>
						<BoxCell $center><CheckBox /></BoxCell>
						<BoxCell />
						{headers.map((h) => (
							<HeadCell key={h.label} $pad={h.pad} $sorted={h.sorted}>
								<HeadLabel $indent={h.indent}>
									{h.label}
									{h.sorted && <svg width="10" height="13" viewBox="0 0 10 13" fill="none" stroke="#1877f2" strokeWidth="1.300" style={{ marginLeft: 3, verticalAlign: -2 }}><path d="M5 13V1M1 5l4-4 4 4" /></svg>}
								</HeadLabel>
								{!h.sorted && !h.noCaret && <SortCaret />}
							</HeadCell>
						))}
						<BoxCell $plain $center><AddColumnIcon /></BoxCell>
					</GridRow>

					{rows.map((row, i) => (
						<GridRow key={row.name} $h={i === 0 ? 46 : 47} $bg={row.selected ? '#ebf3fe' : '#f4f5f7'} $bottom={i === 1}>
							<BoxCell $top={11}>
								<CheckBox>
									{row.selected && (
										<svg width="14" height="12" viewBox="0 0 14 12" fill="none" stroke="#1877f2" strokeWidth="1.500">
											<path d="M1 6.500L5 11 13 1" />
										</svg>
									)}
								</CheckBox>
							</BoxCell>
							<BoxCell $top={11} $left={9}>
								<Toggle $on={row.selected}><i /></Toggle>
							</BoxCell>
							<Cell $left={13}><CampaignLink>{row.name}</CampaignLink></Cell>
							<Cell $left={11}>
								{row.selected ? (
									<>
										<StatusDot />
										Aktif
									</>
								) : (
									<Muted>Kapalı</Muted>
								)}
							</Cell>
							<Cell $end $right={12}>En düşük ücret</Cell>
							<Cell $end>
								{row.budget}
								<SubValue>Toplam</SubValue>
							</Cell>
							<Cell $left={13}>7 gün tıklama</Cell>
							<Cell $end $right={12}>
								—
								<SubValue>Bağlantıya Tıklama</SubValue>
							</Cell>
							<Cell $end>{row.reach}</Cell>
							<Cell $end>{row.impressions}</Cell>
							<Cell $end $right={12}>
								—
								<SubValue>Bağlantı Tıklaması Başına</SubValue>
							</Cell>
							<Cell $end>{row.spent}</Cell>
							<Cell $end><DateValue>29 Nis 2021</DateValue></Cell>
							<Cell $end $right={12}>{row.frequency}</Cell>
							<Cell $end $right={13}>—</Cell>
							<Cell $plain />
						</GridRow>
					))}

					<GridRow $h={62}>
						<BoxCell $plain />
						<BoxCell />
						<Cell $left={9} $top={7}>
							<SummaryLabel>
								<ChevronRight size={14} strokeWidth={1.8} style={{ marginRight: 11 }} />
								2 kampanyadan sonuçlar
								<InfoIcon size={12} fill="#606770" />
							</SummaryLabel>
						</Cell>
						<Cell $plain />
						<Cell $plain />
						<Cell />
						<Cell $left={11} $top={7}><StrongValue>7 gün tıklama</StrongValue></Cell>
						{summary.map((item, i) => (
							<Cell key={i} $end $right={5} $top={7}>
								{item && (
									<>
										<StrongValue>{item[0]}</StrongValue>
										<SubValue>{item[1]}</SubValue>
									</>
								)}
							</Cell>
						))}
					</GridRow>

					<Watermark>
						<WatermarkTitle>Windows'u Etkinleştir</WatermarkTitle>
						<WatermarkText>Windows'u etkinleştirmek için Ayarlar'a gidin.</WatermarkText>
					</Watermark>
				</Card>
			</Main>

			<RightRail>
				<RailClose><X size={20} strokeWidth={1.5} /></RailClose>
				<RailAction><BarsIcon /></RailAction>
				<RailAction><PencilIcon /></RailAction>
				<RailAction><ClockIcon /></RailAction>
			</RightRail>
		</Workspace>

		<Taskbar>
			<StartButton><WindowsLogo /></StartButton>
			<TaskSearch>
				<TaskSearchIcon />
				Aramak için buraya yazın
			</TaskSearch>
			<TaskView><TaskViewIcon /></TaskView>
			<TaskItem><EdgeIcon /></TaskItem>
			<TaskItem $running><ExplorerIcon /></TaskItem>
			<TaskItem><StoreIcon /></TaskItem>
			<TaskItem><MailIcon /></TaskItem>
			<TaskItem $running><StickyIcon /></TaskItem>
			<TaskItem $running><PolygonIcon /></TaskItem>
			<TaskItem $running $active><ChromeIcon /></TaskItem>
			<TaskItem $running><NotepadIcon /></TaskItem>
			<Tray>
				<TrayIcon>
					<svg width="14" height="8" viewBox="0 0 14 8" fill="none" stroke="#fff" strokeWidth="1.200"><path d="M1 7l6-6 6 6" /></svg>
				</TrayIcon>
				<TrayIcon><BatteryIcon /></TrayIcon>
				<TrayIcon><NetworkIcon /></TrayIcon>
				<TrayIcon><SoundIcon /></TrayIcon>
				<Clock>
					13:25
					<br />
					28.04.2021
				</Clock>
				<NoticeIcon>
					<NoticeGlyph />
					<NoticeCount>2</NoticeCount>
				</NoticeIcon>
				<ShowDesktop />
			</Tray>
		</Taskbar>
	</Page>
);

export default App;
